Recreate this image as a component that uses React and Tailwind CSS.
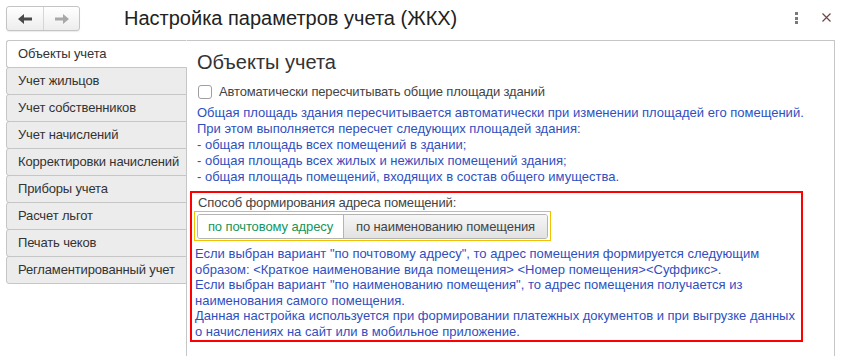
const tabs = [
  'Объекты учета',
  'Учет жильцов',
  'Учет собственников',
  'Учет начислений',
  'Корректировки начислений',
  'Приборы учета',
  'Расчет льгот',
  'Печать чеков',
  'Регламентированный учет',
];

function Arrow({ dir = 'left', color }) {
  // filled arrow: thick shaft with a triangular head
  const d =
    dir === 'left'
      ? 'M0 5 L6 0 L6 3.5 L14 3.5 L14 6.5 L6 6.5 L6 10 Z'
      : 'M14 5 L8 0 L8 3.5 L0 3.5 L0 6.5 L8 6.5 L8 10 Z';
  return (
    <svg width="14" height="10" viewBox="0 0 14 10">
      <path d={d} fill={color} />
    </svg>
  );
}

export default function App() {
  return (
    <div className="w-[843px] h-[356px] overflow-hidden bg-white font-['Liberation_Sans',Arial,sans-serif] text-[#333]">
      {/* Header */}
      <div className="h-[40px] flex items-start">
        <div className="ml-[6px] mt-[6px] w-[74px] h-[25px] flex rounded-[3px] border border-[#c4c4c4] bg-gradient-to-b from-white to-[#ededed] shadow-[0_1px_1px_rgba(0,0,0,0.08)]">
          <div className="w-[37px] flex items-center justify-center border-r border-[#d6d6d6]">
            <Arrow dir="left" color="#4a4a4a" />
          </div>
          <div className="flex-1 flex items-center justify-center">
            <Arrow dir="right" color="#a8a8a8" />
          </div>
        </div>
        <div className="ml-[44px] mt-[6px] text-[20px] leading-[24px] text-[#222]">
          Настройка параметров учета (ЖКХ)
        </div>
        <div className="ml-auto mt-[12px] mr-[24px] flex flex-col gap-[1.5px]">
          <span className="w-[3px] h-[3px] bg-[#7a7a7a]" />
          <span className="w-[3px] h-[3px] bg-[#7a7a7a]" />
          <span className="w-[3px] h-[3px] bg-[#7a7a7a]" />
        </div>
        <div className="mt-[13px] mr-[12px]">
          <svg width="9" height="9" viewBox="0 0 9 9">
            <path d="M0.5 0.5 L8.5 8.5 M8.5 0.5 L0.5 8.5" stroke="#6e4848" strokeWidth="1.2" />
          </svg>
        </div>
      </div>

      {/* Body */}
      <div className="flex pl-[6px] h-[316px]">
        <div className="w-[181px] shrink-0 relative z-10 flex flex-col text-[13px] tracking-[-0.15px]">
          {tabs.map((t, i) => (
            <div
              key={t}
              className={
                i === 0
                  ? 'h-[28px] flex items-center pl-[11px] rounded-l-[3px] border border-[#c6c6c6] border-r-white bg-white'
                  : 'h-[28px] -mt-px flex items-center pl-[11px] rounded-l-[3px] border border-[#c6c6c6] bg-[#ececec]'
              }
            >
              {t}
            </div>
          ))}
        </div>

        <div className="-ml-px w-[649px] h-full border-t border-l border-r border-[#c6c6c6] pt-[9px] pl-[10px]">
          <div className="text-[20px] leading-[24px] text-[#333]">Объекты учета</div>

          <label className="mt-[10px] h-[16px] flex items-center gap-[7px] text-[13px] tracking-[-0.15px] text-[#444]">
            <span className="ml-px w-[14px] h-[14px] rounded-[3px] border border-[#9f9f9f] bg-white" />
            Автоматически пересчитывать общие площади зданий
          </label>

          <div className="mt-[5px] text-[13px] leading-[16px] text-[#2f4fc0]">
            <div>Общая площадь здания пересчитывается автоматически при изменении площадей его помещений.</div>
            <div>При этом выполняется пересчет следующих площадей здания:</div>
            <div>- общая площадь всех помещений в здании;</div>
            <div>- общая площадь всех жилых и нежилых помещений здания;</div>
            <div>- общая площадь помещений, входящих в состав общего имущества.</div>
          </div>

          {/* Highlighted block */}
          <div className="-ml-[7px] mt-[6px] w-[613px] h-[151px] border-2 border-[#ff0000] pt-[2px]">
            <div className="ml-[6px] text-[13px] leading-[16px] tracking-[-0.15px] text-[#444]">
              Способ формирования адреса помещений:
            </div>
            <div className="ml-[2px] w-[357px] h-[30px] border border-[#f2c200] pt-[2px] pl-[2px]">
              <div className="w-[351px] h-[25px] flex rounded-[3px] border border-[#b4b4b4] text-[13px] tracking-[-0.1px] overflow-hidden">
                <div className="w-[146px] flex items-center justify-center bg-white text-[#14955a] border-r border-[#b4b4b4]">
                  по почтовому адресу
                </div>
                <div className="flex-1 flex items-center justify-center bg-gradient-to-b from-[#f6f6f6] to-[#e2e2e2] text-[#444]">
                  по наименованию помещения
                </div>
              </div>
            </div>
            <div className="ml-[3px] mt-[5px] text-[13px] leading-[15.5px] text-[#2f4fc0]">
              <div>Если выбран вариант "по почтовому адресу", то адрес помещения формируется следующим</div>
              <div>образом: &lt;Краткое наименование вида помещения&gt; &lt;Номер помещения&gt;&lt;Суффикс&gt;.</div>
              <div>Если выбран вариант "по наименованию помещения", то адрес помещения получается из</div>
              <div>наименования самого помещения.</div>
              <div>Данная настройка используется при формировании платежных документов и при выгрузке данных</div>
              <div>о начислениях на сайт или в мобильное приложение.</div>
            </div>
          </div>
        </div>
      </div>
    </div>
  );
}
